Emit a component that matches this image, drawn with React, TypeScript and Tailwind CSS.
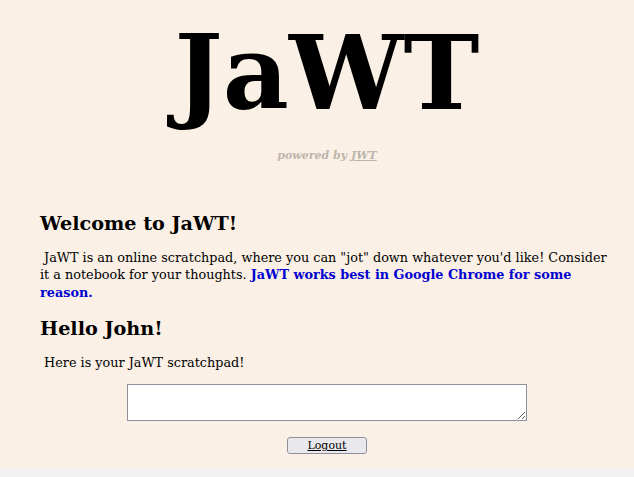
export default function App() {
  return (
    <div className="min-h-screen bg-[#f1f1f1]">
      <div
        className="h-[469px] bg-[#faf0e6] pl-[20px] text-black"
        style={{ fontFamily: '"DejaVu Serif", serif' }}
      >
        <div className="flex flex-col items-center pt-[14px]">
          <h1 className="text-[102px] font-bold leading-[1.16]">JaWT</h1>
          <p className="mt-[16px] text-[11px] font-bold italic text-[#bdb5ad]">
            powered by <a className="underline">JWT</a>
          </p>
        </div>

        <div className="pl-[20px] pr-[20px] pt-[45px]">
          <h2 className="text-[19.2px] font-bold">Welcome to JaWT!</h2>
          <p className="mt-[10px] text-[12.8px] leading-[17.5px]">
            &nbsp;JaWT is an online scratchpad, where you can "jot" down whatever you'd like! Consider it a
            notebook for your thoughts.{' '}
            <span className="font-bold text-[#0000d0]">JaWT works best in Google Chrome for some reason.</span>
          </p>
          <h2 className="mt-[14px] text-[19.2px] font-bold">Hello John!</h2>
          <p className="mt-[10px] text-[12.8px] leading-[17.5px]">&nbsp;Here is your JaWT scratchpad!</p>
        </div>

        <div className="flex flex-col items-center pt-[13px]">
          <textarea className="h-[37px] w-[400px] resize border border-[#8f8f9d] bg-white" />
          <button className="mt-[16px] h-[17px] w-[80px] rounded-[3px] border border-[#8f8f9d] bg-[#e9e9ed] text-[11px] leading-none underline">
            Logout
          </button>
        </div>
      </div>
    </div>
  )
}
